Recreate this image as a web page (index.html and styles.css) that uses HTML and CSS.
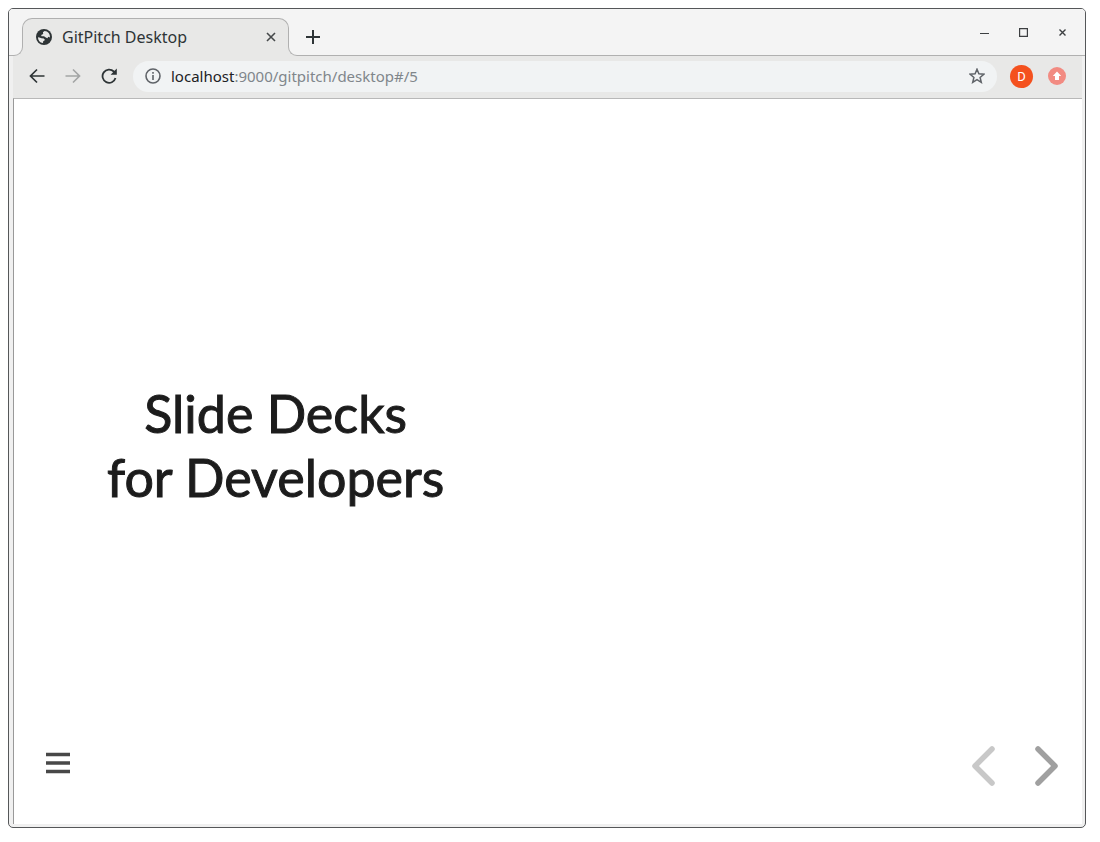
FILE: index.html
```
<!DOCTYPE html>
<html lang="en">
<head>
<meta charset="utf-8">
<meta name="viewport" content="width=device-width, initial-scale=1">
<title>GitPitch Desktop</title>
<link rel="stylesheet" href="styles.css">
</head>
<body>
<div class="window">
  <header class="tabstrip">
    <div class="tab">
      <svg class="globe" viewBox="0 0 16 16" aria-hidden="true"><circle cx="8" cy="8" r="8" fill="#2e3436"/><path d="M2 8.2 3.3 8.4 5.6 9.3 7.8 9.4 9 11 7.2 12.2 7 14C4 13.8 2 11.200 2 8.200zM8.600 2 6.900 3.300 7.200 5 5.200 6.100 5.500 7.300 8 7.200 9.800 8.600 11.400 9.200 12.300 7.800 13.900 8.600C14.300 5 12 2.200 8.600 2z" fill="#e8e8e7"/></svg>
      <span class="tab-title">GitPitch Desktop</span>
      <button class="icon-button tab-close" aria-label="Close tab"><svg width="10" height="10" viewBox="0 0 10 10"><path d="M1 1l8 8M9 1l-8 8" stroke="#46494b" stroke-width="1.600" fill="none"/></svg></button>
    </div>
    <button class="icon-button new-tab" aria-label="New tab"><svg width="14" height="14" viewBox="0 0 14 14"><path d="M7 0v14M0 7h14" stroke="#2e3436" stroke-width="2"/></svg></button>
    <div class="window-controls">
      <button class="icon-button" aria-label="Minimize"><svg width="9" height="9" viewBox="0 0 9 9"><path d="M0 5.500h9" stroke="#3c3f41" stroke-width="1"/></svg></button>
      <button class="icon-button" aria-label="Maximize"><svg width="9" height="9" viewBox="0 0 9 9"><path d="M.6.6h7.800v7.800H.6z" stroke="#3c3f41" stroke-width="1.200" fill="none"/></svg></button>
      <button class="icon-button" aria-label="Close"><svg width="9" height="9" viewBox="0 0 9 9"><path d="M1.500 1.500l6 6M7.500 1.500l-6 6" stroke="#3c3f41" stroke-width="1.400"/></svg></button>
    </div>
  </header>
  <nav class="toolbar">
    <div class="nav-buttons">
      <button class="icon-button" aria-label="Back"><svg width="16" height="16" viewBox="0 0 16 16"><path d="M15.500 8H2M8 1.500 1.500 8 8 14.500" stroke="#2e3436" stroke-width="1.700" fill="none"/></svg></button>
      <button class="icon-button" aria-label="Forward"><svg width="16" height="16" viewBox="0 0 16 16"><path d="M.5 8H14M8 1.500 14.500 8 8 14.500" stroke="#a3a5a5" stroke-width="1.700" fill="none"/></svg></button>
      <button class="icon-button" aria-label="Reload"><svg width="16" height="16" viewBox="0 0 16 16"><path d="M14.500 10A6.600 6.600 0 1 1 12.800 3.500L14 4.800" stroke="#2e3436" stroke-width="1.800" fill="none"/><path d="M15.800.6v6.200H9.600z" fill="#2e3436"/></svg></button>
    </div>
    <div class="address">
      <svg width="16" height="16" viewBox="0 0 16 16" aria-hidden="true"><circle cx="8" cy="8" r="7" fill="none" stroke="#5f6368" stroke-width="1.600"/><path d="M8 7v5M8 4v1.700" stroke="#5f6368" stroke-width="1.600"/></svg>
      <a class="url" href="#/5"><span class="host">localhost</span>:9000/gitpitch/desktop#/5</a>
      <button class="icon-button" aria-label="Bookmark this page"><svg width="16" height="16" viewBox="0 0 16 16"><path d="M8 1.200 9.900 5.800l5 .4-3.800 3.200 1.200 4.900L8 11.700l-4.300 2.600 1.200-4.900L1.100 6.200l5-.4z" fill="none" stroke="#5f6368" stroke-width="1.500"/></svg></button>
    </div>
    <button class="avatar" aria-label="Profile D">D</button>
    <button class="icon-button update" aria-label="Update"><svg width="18" height="18" viewBox="0 0 18 18"><circle cx="9" cy="9" r="9" fill="#f28b82"/><path d="M9 4.500 13.200 9H11v4H7V9H4.800z" fill="#fff"/></svg></button>
  </nav>
  <main class="page">
    <h1 class="headline">Slide Decks<br>for Developers</h1>
    <footer class="deck-controls">
      <button class="icon-button" aria-label="Menu"><svg width="24" height="22" viewBox="0 0 24 22"><path d="M0 2.500h24M0 11h24M0 19.500h24" stroke="#484848" stroke-width="3.600"/></svg></button>
      <div class="arrows">
        <button class="icon-button" aria-label="Previous slide"><svg width="24" height="42" viewBox="0 0 24 42"><path d="M21 4 4 21l17 17" fill="none" stroke="#c8c8c8" stroke-width="5.500" stroke-linecap="round" stroke-linejoin="round"/></svg></button>
        <button class="icon-button" aria-label="Next slide"><svg width="24" height="42" viewBox="0 0 24 42"><path d="M3 4l17 17L3 38" fill="none" stroke="#a0a0a0" stroke-width="5.500" stroke-linecap="round" stroke-linejoin="round"/></svg></button>
      </div>
    </footer>
  </main>
</div>
</body>
</html>
```
FILE: styles.css
```
* {
  box-sizing: border-box;
}

body {
  margin: 0;
  min-height: 100vh;
  padding: 8px 14px 14px 8px;
  display: flex;
  background: #fff;
  font-family: "Noto Sans", sans-serif;
  color: #2e3436;
}

button {
  font: inherit;
  color: inherit;
}

.icon-button {
  display: flex;
  align-items: center;
  justify-content: center;
  padding: 0;
  border: 0;
  background: none;
}

svg {
  display: block;
  flex: none;
}

.window {
  flex: 1;
  min-width: 0;
  display: flex;
  flex-direction: column;
  border: 1px solid #555759;
  border-radius: 5px;
  overflow: hidden;
  background: #f0f0f0;
}

.tabstrip {
  display: flex;
  align-items: center;
  height: 47px;
  padding: 9px 18px 0 13px;
  border-bottom: 1px solid #b0b0b0;
  background: #f4f4f4;
}

.tab {
  position: relative;
  display: flex;
  align-items: center;
  gap: 10px;
  width: 267px;
  height: 38px;
  margin-bottom: -1px;
  padding: 0 12px 2px 13px;
  border: 1px solid #b0b0b0;
  border-bottom: 0;
  border-radius: 10px 10px 0 0;
  background: #e8e8e7;
}

/* Curved feet joining the tab to the toolbar */
.tab::before,
.tab::after {
  content: "";
  position: absolute;
  bottom: 0;
  width: 10px;
  height: 10px;
  border-bottom: 1px solid #b0b0b0;
  background: #f4f4f4;
  box-shadow: 0 0 0 6px #e8e8e7;
  clip-path: inset(0);
}

.tab::before {
  right: 100%;
  border-right: 1px solid #b0b0b0;
  border-bottom-right-radius: 9px;
}

.tab::after {
  left: 100%;
  border-left: 1px solid #b0b0b0;
  border-bottom-left-radius: 9px;
}

.globe {
  width: 16px;
  height: 16px;
}

.tab-title {
  flex: 1;
  font-size: 16px;
  line-height: 22px;
  white-space: nowrap;
}

.new-tab {
  margin-left: 17px;
}

.window-controls {
  display: flex;
  gap: 30px;
  margin: -8px 0 0 auto;
}

.toolbar {
  display: flex;
  align-items: center;
  height: 42px;
  margin: 0 3px 0 4px;
  padding: 0 16px 2px 16px;
  background: #e8e8e7;
}

.nav-buttons {
  display: flex;
  gap: 20px;
}

.address {
  flex: 1;
  display: flex;
  align-items: center;
  height: 31px;
  margin: 0 13px 0 16px;
  padding: 0 12px;
  gap: 10px;
  border-radius: 16px;
  background: #f1f3f4;
}

.url {
  flex: 1;
  font-size: 15px;
  line-height: 22px;
  color: #80868b;
  text-decoration: none;
}

.host {
  color: #202124;
}

.avatar {
  width: 23px;
  height: 23px;
  margin-right: 15px;
  padding: 0;
  border: 0;
  border-radius: 50%;
  background: #f4511e;
  color: #fff;
  font-family: Roboto, sans-serif;
  font-size: 13px;
  line-height: 23px;
}

.page {
  flex: 1;
  display: flex;
  flex-direction: column;
  margin: 0 3px 3px 4px;
  border-top: 1px solid #b8b8b8;
  border-left: 1px solid #999;
  background: #fff;
}

.headline {
  flex: 1;
  display: flex;
  flex-direction: column;
  justify-content: center;
  width: 49%;
  margin: 0;
  padding-top: 46px;
  font-family: Lato, sans-serif;
  font-size: 52px;
  font-weight: 400;
  line-height: 64px;
  text-align: center;
  color: #1c1c1c;
  -webkit-text-stroke: 1px #1c1c1c;
}

.deck-controls {
  display: flex;
  align-items: flex-start;
  justify-content: space-between;
  padding: 0 23px 37px 32px;
}

.deck-controls > .icon-button {
  padding-top: 7px;
}

.arrows {
  display: flex;
  gap: 40px;
}
```
